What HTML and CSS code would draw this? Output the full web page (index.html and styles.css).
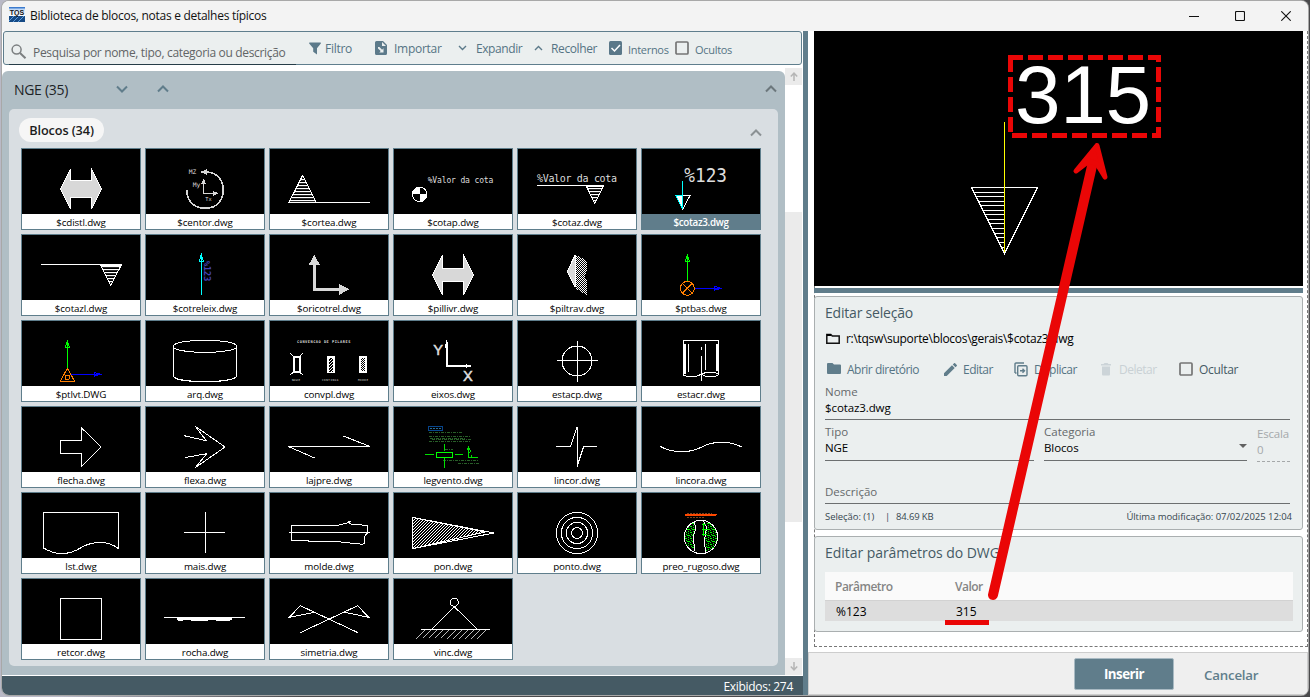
FILE: index.html
```html
<!DOCTYPE html>
<html lang="pt-BR">
<head>
<meta charset="utf-8">
<title>Biblioteca de blocos, notas e detalhes típicos</title>
<link rel="stylesheet" href="styles.css">
</head>
<body>
<svg class="defs" width="0" height="0">
  <defs>
    <pattern id="rows" width="9" height="9" patternUnits="userSpaceOnUse"><path d="M0 1.5H9" stroke="#fff" stroke-width="4"/></pattern>
    <pattern id="diag" width="9" height="9" patternUnits="userSpaceOnUse"><path d="M0 9L9 0M-3 3L3 -3M6 12L12 6" stroke="#fff" stroke-width="3"/></pattern>
    <pattern id="dots" width="6" height="6" patternUnits="userSpaceOnUse"><path d="M0 1.5H3M3 4.5H6" stroke="#fff" stroke-width="3"/></pattern>
    <pattern id="speck" width="15" height="18" patternUnits="userSpaceOnUse"><path d="M0 1.5H6M9 4.5H12M3 7.5H6M6 10.5H15M0 13.5H3M9 16.5H12" stroke="#0f0" stroke-width="3"/></pattern>
    <linearGradient id="sky" x2="0" y2="1"><stop offset="0" stop-color="#1b63c4"/><stop offset=".3" stop-color="#cfe3fa"/><stop offset="1" stop-color="#fff"/></linearGradient>
  </defs>
</svg>
<div class="window">
  <header class="titlebar">
    <svg class="logo" width="16" height="16" viewBox="0 0 16 16"><path fill="url(#sky)" d="M0 0h16v9H0z"/><path fill="#164a85" d="M0 9h16v6H0z"/><path d="M0 14l5-5M4 15l6-6M9 15l6-6" stroke="#5c9bdc"/><text x="0.8" y="8" textLength="14.4" lengthAdjust="spacingAndGlyphs">TQS</text></svg>
    <h1>Biblioteca de blocos, notas e detalhes típicos</h1>
    <div class="winbtns">
      <svg width="10" height="10"><path d="M0 5.5H10"/></svg>
      <svg width="10" height="10"><rect x=".5" y=".5" width="9" height="9" rx="1"/></svg>
      <svg width="10" height="10"><path d="M.3 .3L9.7 9.7M9.7 .3L.3 9.7"/></svg>
    </div>
  </header>

  <div class="body">
    <section class="left">
      <div class="toolbar">
        <div class="search">
          <svg width="16" height="16" viewBox="0 0 16 16"><circle cx="5.6" cy="5.6" r="4.5"/><path d="M9 9l5.5 5.3" stroke-width="2"/></svg>
          <span>Pesquisa por nome, tipo, categoria ou descrição</span>
        </div>
        <button class="tool t-filter"><svg width="12" height="13" viewBox="0 0 12 13"><path d="M.6.5h10.8c.6 0 .7.6.4 1L8 6.3v6.2L4.2 9.8V6.3L.2 1.500C-.1 1.100.1.500.6.500z"/></svg><span>Filtro</span></button>
        <button class="tool t-import"><svg width="12" height="14" viewBox="0 0 12 14"><path fill-rule="evenodd" d="M1.500 0h6.500l4 4v8.500a1.500 1.500 0 0 1-1.500 1.500h-9A1.500 1.500 0 0 1 0 12.500v-11A1.500 1.500 0 0 1 1.500 0zM7 1v4h4zM3 6v1.400l2.700 2.700-1.400 1.400H8.500V7.300L7.100 8.700 4.400 6z"/></svg><span>Importar</span></button>
        <button class="tool t-expand"><svg class="ln" width="9" height="6"><path d="M1 1l3.500 3.500L8 1"/></svg><span>Expandir</span></button>
        <button class="tool t-collapse"><svg class="ln" width="9" height="6"><path d="M1 5l3.500-3.500L8 5"/></svg><span>Recolher</span></button>
        <label class="check c-int"><svg width="13" height="14"><rect width="13" height="14" rx="1.500" fill="#5a7889"/><path d="M2.500 7l3 3L11 4" fill="none" stroke="#fff" stroke-width="1.500"/></svg><span>Internos</span></label>
        <label class="check c-oc"><svg width="14" height="14"><rect x="1" y="1" width="12" height="12" rx="1" fill="none" stroke="#757575" stroke-width="1.700"/></svg><span>Ocultos</span></label>
      </div>

      <div class="browser">
        <div class="group">
          <div class="group-head">
            <span class="group-name">NGE (35)</span>
            <svg class="g1" width="12" height="8"><path d="M1 1.500l5 5 5-5"/></svg>
            <svg class="g2" width="12" height="8"><path d="M1 6.500l5-5 5 5"/></svg>
            <svg class="g3" width="12" height="8"><path d="M1 6.500l5-5 5 5"/></svg>
          </div>
          <div class="sub">
            <div class="sub-head"><span class="pill">Blocos (34)</span><svg class="g3" width="12" height="8"><path d="M1 6.500l5-5 5 5"/></svg></div>
            <div class="grid">
              <figure class="card"><svg viewBox="36 27 354 195"><path fill="#d8d8d8" stroke="#fff" stroke-width="3" d="M151 147L182 86V121H244V86L275 147L244 208V173H182V208Z"/></svg><figcaption>$cdistl.dwg</figcaption></figure>
              <figure class="card"><svg viewBox="408 27 354 195"><g fill="none" stroke="#d8d8d8" stroke-width="5"><path d="M530 150C530 184 553 205 586 205C620 205 640 181 640 150C640 120 620 97 590 96"/><path stroke-width="3" d="M581 125V160H615"/></g><path fill="#d8d8d8" d="M571 96l20-9v18zM581 116l7 15h-14zM625 160l-15-7v14z"/><text x="536" y="102" font-size="19">MZ</text><text x="548" y="141" font-size="19">My</text><text x="586" y="183" font-size="16">Tx</text></svg><figcaption>$centor.dwg</figcaption></figure>
              <figure class="card"><svg viewBox="780 27 354 195"><path class="w" fill="url(#rows)" d="M878 106L837 187H918Z"/><path class="w" d="M834 187.500H1080"/></svg><figcaption>$cortea.dwg</figcaption></figure>
              <figure class="card"><svg viewBox="12 27 354 195"><text x="113" y="128" font-size="24" textLength="197">%Valor da cota</text><circle class="w" cx="89" cy="163" r="22"/><path fill="#fff" d="M89 163V141A22 22 0 0 0 67 163ZM89 163V185A22 22 0 0 0 111 163Z"/></svg><figcaption>$cotap.dwg</figcaption></figure>
              <figure class="card"><svg viewBox="384 27 354 195"><text x="441" y="125" font-size="30" textLength="240">%Valor da cota</text><path class="w" d="M441 136.500H642"/><path class="w" fill="url(#rows)" d="M589 138H641L614 190Z"/></svg><figcaption>$cotaz.dwg</figcaption></figure>
              <figure class="card selected"><svg viewBox="756 27 354 195"><text x="883" y="125" font-size="58" textLength="128" lengthAdjust="spacingAndGlyphs">%123</text><path class="w" d="M857 167H900L878 208Z"/><path fill="#fff" d="M860 168h18v38z"/><path class="w c" d="M877.500 124V208M878 208L857 167H878"/></svg><figcaption>$cotaz3.dwg</figcaption></figure>

              <figure class="card"><svg viewBox="36 285 354 195"><path class="w" d="M93 373.500H336"/><path class="w" fill="url(#rows)" d="M271 375H334L302 436Z"/></svg><figcaption>$cotazl.dwg</figcaption></figure>
              <figure class="card"><svg viewBox="408 285 354 195"><path class="w c" d="M574.500 465V343M568 364L574 343L580 364Z"/><text class="bold" transform="translate(583 362) rotate(90)" font-size="27" style="fill:#4242b5" textLength="62">%123</text></svg><figcaption>$cotreleix.dwg</figcaption></figure>
              <figure class="card"><svg viewBox="780 285 354 195"><path fill="none" stroke="#d8d8d8" stroke-width="9" d="M913 370V448.500H990"/><path fill="#d8d8d8" d="M913 345l17 30h-34zM1017 448l-30-17v34z"/></svg><figcaption>$oricotrel.dwg</figcaption></figure>
              <figure class="card"><svg viewBox="12 285 354 195"><path fill="#d8d8d8" stroke="#fff" stroke-width="3" d="M127 405L158 344V385H220V344L251 405L220 466V425H158V466Z"/></svg><figcaption>$pillivr.dwg</figcaption></figure>
              <figure class="card"><svg viewBox="384 285 354 195"><path fill="#d8d8d8" stroke="#fff" stroke-width="3" d="M532 394L556 344V442Z"/><path fill="url(#dots)" d="M558 344L590 362V396L585 410L591 425V465L558 447Z"/></svg><figcaption>$piltrav.dwg</figcaption></figure>
              <figure class="card"><svg viewBox="756 285 354 195"><path class="w g" d="M892.500 425V346M886 364L892 346L898 364Z"/><path class="w b" d="M914 445.500H993M973 439L993 445L973 451Z"/><g class="w o"><circle cx="892" cy="445" r="21"/><path d="M877 430L907 460M907 430L877 460"/></g></svg><figcaption>$ptbas.dwg</figcaption></figure>

              <figure class="card"><svg viewBox="36 18 354 195"><path class="w g" d="M172.500 160V79M166 97L172 79L178 97Z"/><path class="w b" d="M182 178.500H272M252 172L272 178L252 184Z"/><path class="w o" d="M172 160L151 199H194Z"/><circle class="w o" cx="172" cy="187" r="7"/></svg><figcaption>$ptlvt.DWG</figcaption></figure>
              <figure class="card"><svg viewBox="408 18 354 195"><path class="w" d="M490 94C490 70 680 70 680 94C680 118 490 118 490 94V184C500 205 668 205 680 184V94"/></svg><figcaption>arq.dwg</figcaption></figure>
              <figure class="card"><svg viewBox="780 18 354 195"><text class="bold" x="861" y="84" font-size="11" textLength="160">CONVENCAO DE PILARES</text><path class="w" d="M840 114L850 124M879 114L869 124M840 180L850 172M879 180L869 172"/><rect class="w" x="851" y="126" width="19" height="46" style="stroke-width:6"/><rect class="w" x="953" y="126" width="19" height="46" style="stroke-width:5" fill="url(#diag)"/><rect class="w" x="1049" y="126" width="19" height="46" style="stroke-width:6" fill="url(#dots)"/><text x="846" y="198" font-size="8">NASCE</text><text x="936" y="198" font-size="8" textLength="49">CONTINUA</text><text x="1044" y="198" font-size="8" textLength="30">MORRE</text></svg><figcaption>convpl.dwg</figcaption></figure>
              <figure class="card"><svg viewBox="12 18 354 195"><path class="w" style="stroke-width:6" d="M171 80V153H240"/><path fill="#fff" d="M169.500 76l6 22h-12zM249 153l-22-6v12z"/><text class="sans" x="130" y="119" font-size="44">Y</text><text class="sans" x="219" y="198" font-size="44">X</text></svg><figcaption>eixos.dwg</figcaption></figure>
              <figure class="card"><svg viewBox="384 18 354 195"><circle class="w" cx="561" cy="138" r="45"/><path class="w" d="M562.500 78V201M500 136.500H624"/></svg><figcaption>estacp.dwg</figcaption></figure>
              <figure class="card"><svg viewBox="756 18 354 195"><path class="w" d="M880.500 76V180C890 186 915 188 934 178C950 168 975 170 985 178V76.500H880M895.500 88V172M946.500 88V166M934.500 97V106M934.500 122V198M934 178C950 188 972 188 985 180"/><path class="w" style="stroke-width:7" d="M884 88V176M981 88V168"/></svg><figcaption>estacr.dwg</figcaption></figure>

              <figure class="card"><svg viewBox="36 276 354 195"><path class="w" d="M151 377H214V338L273 396L214 455V415H151Z"/></svg><figcaption>flecha.dwg</figcaption></figure>
              <figure class="card"><svg viewBox="408 276 354 195"><path class="w" d="M522 362L589 377L556 334L645 396L556 458L590 416L524 428"/></svg><figcaption>flexa.dwg</figcaption></figure>
              <figure class="card"><svg viewBox="780 276 354 195"><path class="w" d="M1000 363L1080 394.500H835L914 429"/></svg><figcaption>lajpre.dwg</figcaption></figure>
              <figure class="card"><svg viewBox="12 276 354 195"><rect class="w" x="115.500" y="334.500" width="42" height="12" style="stroke:#08458c"/><path class="w" style="stroke:#246b9b" stroke-dasharray="6 3" d="M120 340.500H152"/><g class="w" style="stroke:#285e28"><path stroke-dasharray="9 3 3 3" d="M117 352.500H215M117 364.500H240M126 373.500H244M117 379.500H240M160 436.500H267M204 444.500H268M166 402.500H188M120 369.500H226"/></g><g class="w" style="stroke:#00e000"><path d="M163.500 387V409M163.500 428V459M106 418.500H131M195 417.500H219M236.500 394V428L265 427M230 406L236 396L242 410L236 415M245 420V427"/><rect style="stroke:#0f0" x="139" y="412" width="48" height="15"/></g></svg><figcaption>legvento.dwg</figcaption></figure>
              <figure class="card"><svg viewBox="384 276 354 195"><path class="w" d="M498 394.500H542L561 336V455L581 394.500H621"/></svg><figcaption>lincor.dwg</figcaption></figure>
              <figure class="card"><svg viewBox="756 276 354 195"><path class="w" d="M810 394C845 413 895 417 935 396C970 377 1020 377 1055 396"/></svg><figcaption>lincora.dwg</figcaption></figure>

              <figure class="card"><svg viewBox="66 9 354 195"><path class="w" d="M130.500 67.500H355.500V176C325 152 280 152 245 172C210 194 170 198 130.500 174Z"/></svg><figcaption>lst.dwg</figcaption></figure>
              <figure class="card"><svg viewBox="438 9 354 195"><path class="w" d="M616.500 66V189M552 127.500H675"/></svg><figcaption>mais.dwg</figcaption></figure>
              <figure class="card"><svg viewBox="810 9 354 195"><path class="w" d="M1014 106H874V152H926V154H1004L1088 163L1094 160V139L1103 128V106L1054 103L1044 96L1052 94M1014 106L1050 97M867 127.500H1110"/></svg><figcaption>molde.dwg</figcaption></figure>
              <figure class="card"><svg viewBox="12 9 354 195"><path class="w" fill="url(#diag)" d="M67.500 82.500L285 126L67.500 176Z"/><path class="w" d="M67 82L312 129L67 176"/></svg><figcaption>pon.dwg</figcaption></figure>
              <figure class="card"><svg viewBox="384 9 354 195"><g class="w"><circle cx="561" cy="129" r="62"/><circle cx="561" cy="129" r="47"/><circle cx="561" cy="129" r="32"/><circle cx="561" cy="129" r="16"/></g></svg><figcaption>ponto.dwg</figcaption></figure>
              <figure class="card"><svg viewBox="756 9 354 195"><path fill="#ff4800" d="M885 72h96l-4 6h-92z"/><path class="w" style="stroke:#76401f" stroke-dasharray="6 3" d="M891 70.500H965M892 82.500H944"/><circle class="w" cx="933" cy="141" r="50"/><path fill="url(#speck)" d="M913 96L917 115L910 145L914 180L890 167L883 140L892 112ZM953 96L975 112L983 142L973 172L945 186L948 155L944 130Z"/><path class="w" d="M913 96L917 115L910 140L914 184M941 94L950 112L943 154L947 186"/><path class="w g" d="M939 98V138M937 102H947M937 118H950M937 132H948"/></svg><figcaption>preo_rugoso.dwg</figcaption></figure>

              <figure class="card"><svg viewBox="66 267 354 195"><rect class="w" x="181.500" y="325.500" width="123" height="123"/></svg><figcaption>retcor.dwg</figcaption></figure>
              <figure class="card"><svg viewBox="438 267 354 195"><path class="w" d="M492 382.500H735"/><path fill="#fff" d="M531 384H696V390L684 393H655L640 390L610 393H582L565 390L534 393Z"/></svg><figcaption>rocha.dwg</figcaption></figure>
              <figure class="card"><svg viewBox="810 267 354 195"><path class="w" d="M1074 428L901 347L868 382L943 367M901 428L1073 347L1106 382L1031 366"/></svg><figcaption>simetria.dwg</figcaption></figure>
              <figure class="card"><svg viewBox="12 267 354 195"><circle class="w" cx="193" cy="337" r="12"/><path class="w" d="M193 350L126 417M193 350L261 417M93 418.500H300"/><path class="w thin" d="M105 420L79 446M124 420L98 446M142 420L116 446M160 420L134 446M178 420L152 446M197 420L171 446M215 420L189 446M233 420L207 446M251 420L225 446M270 420L244 446M288 420L262 446"/></svg><figcaption>vinc.dwg</figcaption></figure>
            </div>
          </div>
        </div>
        <div class="scroll">
          <div class="sbtn"><svg width="8" height="9"><path d="M4 9V1.500M.8 4.500L4 1.200l3.200 3.300"/></svg></div>
          <div class="thumb"></div>
          <div class="sbtn"><svg width="8" height="9"><path d="M4 0V7.500M.8 4.500L4 7.800l3.200-3.300"/></svg></div>
        </div>
      </div>
      <footer class="status"><span>Exibidos: 274</span></footer>
    </section>

    <div class="splitter"></div>

    <section class="right">
      <div class="dotted">
        <div class="preview">
          <svg width="489" height="255" viewBox="814 31 489 255">
            <path class="p" d="M971.500 187.500H1037.500L1004.500 253.500Z"/>
            <path class="p" d="M973 192.500H1004M975 196.500H1004M978 201.500H1004M980 205.500H1004M983 210.500H1004M985 214.500H1004M987 219.500H1004M990 223.500H1004M992 228.500H1004M994 233.500H1004M997 237.500H1004M1000 242.500H1004M1002 247.500H1004"/>
            <path class="p" style="stroke:#ff0" d="M1004.500 122V252"/>
            <text x="1015" y="123.300" textLength="136">315</text>
          </svg>
        </div>
        <div class="hsplit"></div>
        <section class="box edit">
          <h2>Editar seleção</h2>
          <div class="path"><svg width="14" height="11"><path d="M.8 1.500h4l1.500 1.500h6.900v7.200H.8z" fill="none" stroke="#111" stroke-width="1.500"/><path d="M1 1h4v2H1z"/></svg><span>r:\tqsw\suporte\blocos\gerais\$cotaz3.dwg</span></div>
          <div class="actions">
            <button class="a1"><svg width="14" height="12"><path d="M1 0h4.500L7 1.500h6a1 1 0 0 1 1 1V10a1 1 0 0 1-1 1H1a1 1 0 0 1-1-1V1a1 1 0 0 1 1-1z"/></svg><span>Abrir diretório</span></button>
            <button class="a2"><svg width="13" height="13" viewBox="3 3 18 18"><path d="M3 17.250V21h3.750L17.810 9.940l-3.750-3.750zM20.710 7.040a1 1 0 0 0 0-1.410l-2.340-2.340a1 1 0 0 0-1.410 0l-1.830 1.830 3.750 3.750z"/></svg><span>Editar</span></button>
            <button class="a3"><svg width="14" height="15" fill="none" stroke="#607d8b" stroke-width="1.400"><rect x="3.700" y="3.700" width="9.300" height="10" rx="1"/><path d="M10 1H2a1 1 0 0 0-1 1v9M1 11h1.500M6 8.700h4M8.500 6.700l2 2-2 2"/></svg><span>Duplicar</span></button>
            <button class="a4"><svg width="10" height="13"><path d="M0 1h2.500l1-1h3l1 1H10v1.500H0zM1 3.500h8V11.500a1 1 0 0 1-1 1H2a1 1 0 0 1-1-1z"/></svg><span>Deletar</span></button>
            <label class="a5"><svg width="14" height="14"><rect x="1" y="1" width="12" height="12" rx="1" fill="none" stroke="#757575" stroke-width="1.700"/></svg><span>Ocultar</span></label>
          </div>
          <div class="field name"><label>Nome</label><span>$cotaz3.dwg</span></div>
          <div class="fields">
            <div class="field tipo"><label>Tipo</label><span>NGE</span></div>
            <div class="field cat"><label>Categoria</label><span>Blocos</span><svg width="8" height="4"><path d="M0 0h8L4 4z" fill="#616161"/></svg></div>
            <div class="field esc"><label>Escala</label><span>0</span></div>
          </div>
          <div class="desc">Descrição</div>
          <div class="meta"><span class="m1">Seleção: (1)</span><span class="m2">|</span><span class="m3">84.69 KB</span><span class="m4">Última modificação: 07/02/2025 12:04</span></div>
        </section>
        <section class="box params">
          <h2>Editar parâmetros do DWG</h2>
          <div class="row head"><span>Parâmetro</span><span>Valor</span></div>
          <div class="row val"><span>%123</span><span>315</span></div>
        </section>
      </div>
      <footer class="foot"><button class="ins">Inserir</button><button class="can">Cancelar</button></footer>
    </section>
  </div>
</div>

<svg class="annot" width="1310" height="697" fill="none" stroke="#ea0606">
  <path stroke-width="5" stroke-dasharray="15 5" d="M1008 57.500H1161"/>
  <path stroke-width="5" d="M1158.500 55V62M1158.500 67V82M1158.500 87V102M1158.500 107V122M1158.500 127V138"/>
  <path stroke-width="5" stroke-dasharray="15 5" d="M1012 135.500H1147"/>
  <path stroke-width="5" d="M1152 135.500H1161M1010.500 55V72M1010.500 77V92M1010.500 97V112M1010.500 117V132"/>
  <path stroke-width="10" stroke-linecap="round" d="M993 595L1092 166"/>
  <path fill="#ea0606" stroke-width="5" stroke-linejoin="round" d="M1097 145.500L1076 171L1089 161L1097 164L1105 177Z"/>
  <path stroke-width="5" d="M945 622.500H989"/>
</svg>
</body>
</html>
```
FILE: styles.css
```css
* { box-sizing: border-box; }
body {
  margin: 0; width: 1310px; height: 697px; overflow: hidden; position: relative;
  padding: 1px 2px 2px 2px; background: linear-gradient(90deg, #b9b9c6 0 60px, #4a4a4c 300px);
  font-family: "Open Sans", "Noto Sans", sans-serif; font-size: 11.5px; color: #111;
}
h1, h2, figure { margin: 0; font-weight: 400; }
button { border: 0; padding: 0; background: none; font: inherit; color: inherit; }
svg { display: block; flex: none; }
span { white-space: nowrap; }
.defs { position: absolute; }
.window { width: 1306px; height: 694px; background: #fff; border-radius: 7px; overflow: hidden; display: flex; flex-direction: column; box-shadow: 0 0 0 1px #a8a8a8; }
.titlebar { height: 30px; flex: none; background: #f3f3f3; display: flex; align-items: center; padding-left: 7px; }
.logo { margin-top: -3px; }
.logo text { font: bold 8px "Liberation Sans", sans-serif; fill: #111; }
.titlebar h1 { font-size: 12px; margin: -2px 0 0 5px; letter-spacing: -.28px; color: #111; white-space: nowrap; }
.winbtns { margin-left: auto; display: flex; gap: 36px; padding-right: 17px; }
.winbtns svg { fill: none; stroke: #111; stroke-width: 1.1; }
.body { flex: 1; display: flex; min-height: 0; }
.left { width: 801px; display: flex; flex-direction: column; }

.toolbar { height: 34px; margin: 0 1px 3px 1px; border: 1px solid #5f7e8d; border-radius: 3px; background: #ebefef; display: flex; color: #557484; }
.search { width: 287px; margin-left: 5px; height: 33px; border-bottom: 1px solid #263d48; display: flex; padding-left: 2px; color: #626566; }
.search svg { margin-top: 12px; fill: none; stroke: #7b7f80; stroke-width: 1.5; }
.search span { margin: 12px 0 0 6px; line-height: 18px; font-size: 12px; letter-spacing: -.33px; }
.tool { display: flex; align-items: center; height: 16px; margin-top: 8px; fill: #5c7a8a; font-size: 12px; letter-spacing: -.28px; }
.ln { fill: none; stroke: #5c7a8a; stroke-width: 1.4; }
.t-filter { width: 66px; gap: 4px; margin-left: 13px; }
.t-import { width: 83px; gap: 7px; }
.t-expand { width: 76px; gap: 9px; letter-spacing: -.42px; }
.t-collapse { width: 75px; gap: 8px; letter-spacing: -.38px; }
.check { display: flex; gap: 6px; height: 16px; margin-top: 9px; font-size: 11px; letter-spacing: -.3px; }
.check span { line-height: 18px; }
.c-int { width: 66px; }

.browser { display: flex; height: 607px; }
.group { width: 783px; height: 604px; margin-top: 3px; background: #b0bec5; border-radius: 6px 6px 0 0; padding: 0 7px; }
.group-head { height: 38px; display: flex; align-items: center; padding: 0 1px 2px 5px; font-size: 14px; letter-spacing: -.3px; color: #1d2326; }
.group-name { width: 102px; }
.group svg { fill: none; }
.g1, .g2 { stroke: #607d8b; stroke-width: 2; margin-right: 29px; }
.g3 { stroke: #6c777c; stroke-width: 2; margin-left: auto; }
.sub { height: 557px; background: #d9dee2; border-radius: 5px; padding: 9px 16px 0 12px; }
.sub-head { height: 30px; display: flex; align-items: flex-start; }
.sub-head .g3 { margin-top: 11px; stroke: #8b9194; }
.pill { height: 24px; line-height: 25px; background: #f6f6f6; border-radius: 12px; width: 85px; margin-left: -2px; text-align: center; font-size: 12.700px; font-weight: 600; letter-spacing: -.1px; color: #1c1c1c; }
.grid { display: grid; grid-template-columns: repeat(6, 120px); gap: 4px; }
.card { height: 82px; border: 1px solid #5f7e8c; background: #fff; }
.card svg { width: 118px; height: 65px; background: #000; shape-rendering: crispEdges; }
.card text { font-family: "DejaVu Sans Mono", "Liberation Mono", monospace; fill: #ddd; }
.card text.sans { font-family: "Liberation Sans", sans-serif; stroke: #ddd; stroke-width: 1.5; }
.card text.bold { font-weight: 700; }
.card figcaption { height: 15px; line-height: 17px; text-align: center; font-size: 9.800px; letter-spacing: -.12px; color: #000; }
.selected figcaption { background: #607d8b; color: #fff; font-weight: 600; letter-spacing: -.3px; }
.w { stroke: #fff; stroke-width: 3; }
.w:not([fill]) { fill: none; }
.thin { stroke-width: 2.2; }
.c { stroke: #0ff; } .g { stroke: #0f0; } .b { stroke: #00f; } .o { stroke: #ff7f00; }
.scroll { width: 17px; display: flex; flex-direction: column; background: #fff; }
.sbtn { height: 17px; background: #ebebeb; display: flex; align-items: center; justify-content: center; }
.sbtn svg { fill: none; stroke: #b5b5b5; stroke-width: 1.5; }
.thumb { height: 310px; margin: 127px 0 136px; background: #ebebeb; }
.status { height: 20px; margin-top: 1px; background: #455a64; color: #fff; font-size: 12px; line-height: 22px; text-align: right; padding-right: 10px; letter-spacing: -.3px; }

.splitter { width: 5px; background: #607d8b; }
.right { width: 500px; display: flex; flex-direction: column; }
.dotted { margin: 0 0 5px 6px; height: 616px; border: 1px dashed #777; border-top: 0; display: flex; flex-direction: column; }
.preview, .hsplit, .box { margin-left: -1px; width: 489px; flex: none; }
.preview { height: 255px; background: #000; }
.preview text { font: 82px "Liberation Sans", Arial, sans-serif; fill: #fff; }
.p { fill: none; stroke: #fff; shape-rendering: crispEdges; }
.hsplit { height: 5px; margin-top: 2px; background: #607d8b; }
.box { border: 1px solid #aaafb0; border-radius: 3px; background: #ebefef; padding: 0 10px; }
.box h2 { font-size: 14px; letter-spacing: -.2px; line-height: 20px; color: #455a64; white-space: nowrap; }
.edit { height: 234px; margin-top: 3px; }
.edit h2 { margin-top: 6px; }
.path { display: flex; align-items: center; gap: 6px; height: 18px; margin: 6px 0 0 1px; font-size: 12px; letter-spacing: -.3px; color: #000; }
.actions { display: flex; height: 18px; margin: 13px 0 0 2px; align-items: center; color: #557484; fill: #607d8b; font-size: 12px; letter-spacing: -.3px; }
.actions button, .actions label { display: flex; align-items: center; }
.actions button span, .actions label span { padding-top: 1px; }
.a1 { width: 117px; gap: 6px; letter-spacing: -.5px; } .a2 { width: 70px; gap: 6px; letter-spacing: -.5px; } .a3 { width: 87px; gap: 6px; letter-spacing: -.5px; }
.a4 { width: 78px; gap: 8px; color: #c9d1d5; fill: #ccd4d8; letter-spacing: -.5px; } .a5 { gap: 6px; color: #455a64; }
.field { display: flex; flex-direction: column; border-bottom: 1px solid #6c6f70; position: relative; }
.field label { font-size: 11.500px; line-height: 16px; color: #65696b; letter-spacing: 0; }
.field span { font-size: 11.500px; line-height: 16px; color: #000; letter-spacing: -.1px; }
.name { height: 36px; margin: 6px 2px 0 0; }
.fields { display: flex; height: 37px; margin: 4px 2px 0 0; }
.tipo { width: 209px; } .cat { width: 203px; margin-left: 10px; }
.cat svg { position: absolute; right: 0; top: 20px; }
.esc { width: 33px; margin-left: 10px; padding-top: 2px; height: 38px; border-bottom: 1px dashed #a5a8a9; }
.esc label, .esc span { color: #a5a9ab; }
.esc label { letter-spacing: -.2px; }
.desc { height: 23px; margin: 20px 2px 0 0; border-bottom: 1px solid #6c6f70; font-size: 11.500px; line-height: 22px; color: #65696b; }
.meta { display: flex; height: 26px; line-height: 26px; font-size: 9.500px; letter-spacing: -.05px; color: #37474f; }
.m1 { width: 60px; } .m2 { width: 11px; } .m3 { letter-spacing: -.15px; } .m4 { margin-left: auto; }
.params { height: 96px; margin-top: 6px; }
.params h2 { margin: 6px 0 9px; letter-spacing: -.05px; }
.row { display: flex; padding-left: 10px; margin-right: -1px; }
.row span:first-child { width: 120px; }
.head { height: 28px; line-height: 30px; background: #fafafa; color: #858585; font-size: 12px; font-weight: 600; letter-spacing: -.5px; }
.val { height: 21px; line-height: 22px; background: #ddd; color: #000; font-size: 12px; border-top: 1px solid #d2d2d2; padding-left: 11px; }
.foot { flex: 1; border: 1px solid #cdcdcd; background: #efefef; display: flex; padding: 5px 0 0 265px; }
.ins { width: 100px; height: 32px; background: #607d8b; border: 1px solid #a9bac3; border-radius: 2px; color: #fff; font-size: 13.300px; font-weight: 700; letter-spacing: -.5px; }
.can { margin-left: 30px; height: 32px; padding-top: 1px; color: #607d8b; font-size: 13.300px; font-weight: 600; letter-spacing: -.2px; }
.annot { position: absolute; left: 0; top: 0; }
```
